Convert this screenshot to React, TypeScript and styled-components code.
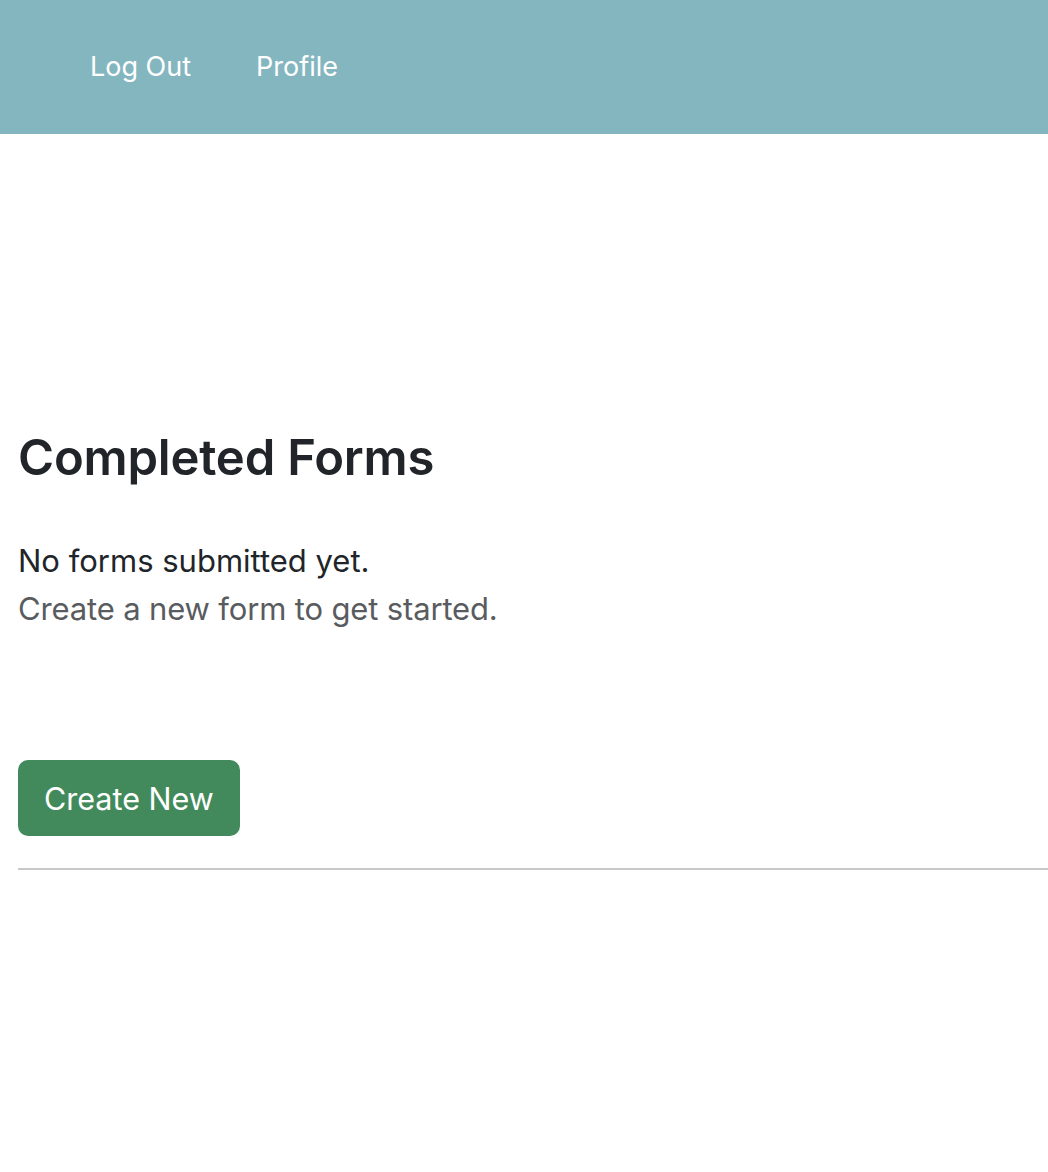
import styled, { createGlobalStyle } from "styled-components";

const GlobalStyle = createGlobalStyle`
    body {
        margin: 0;
        font-family: Inter, "Noto Sans", "Liberation Sans", sans-serif;
        color: #212529;
        background: #ffffff;
    }
`;

const NavBar = styled.nav`
    height: 134px;
    background-color: #84b6c0;
    display: flex;
    align-items: center;
    padding-left: 90px;
    gap: 65px;
`;

const NavLink = styled.a`
    color: #ffffff;
    font-size: 27px;
    line-height: 1;
    margin-top: -2px;
    text-decoration: none;
    cursor: pointer;
`;

const Main = styled.main`
    padding: 0 0 0 18px;
`;

const Title = styled.h1`
    margin: 294px 0 0;
    font-size: 49px;
    font-weight: 600;
    line-height: 60px;
    letter-spacing: -0.2px;
`;

const Empty = styled.div`
    margin-top: 49px;
    font-size: 31px;
    line-height: 48px;
`;

const Hint = styled.div`
    color: #595c5f;
    letter-spacing: -0.15px;
`;

const CreateButton = styled.button`
    margin-top: 127px;
    height: 76px;
    padding: 0 26px;
    border: none;
    border-radius: 10px;
    background-color: #428a5b;
    color: #ffffff;
    font-family: inherit;
    font-size: 30.5px;
    cursor: pointer;
`;

const Divider = styled.hr`
    margin: 32px 0 0;
    border: none;
    border-top: 2px solid #c8c8c8;
`;

export default function App() {
    return (
        <>
            <GlobalStyle />
            <NavBar>
                <NavLink>Log Out</NavLink>
                <NavLink>Profile</NavLink>
            </NavBar>
            <Main>
                <Title>Completed Forms</Title>
                <Empty>
                    <div>No forms submitted yet.</div>
                    <Hint>Create a new form to get started.</Hint>
                </Empty>
                <CreateButton>Create New</CreateButton>
                <Divider />
            </Main>
        </>
    );
}
